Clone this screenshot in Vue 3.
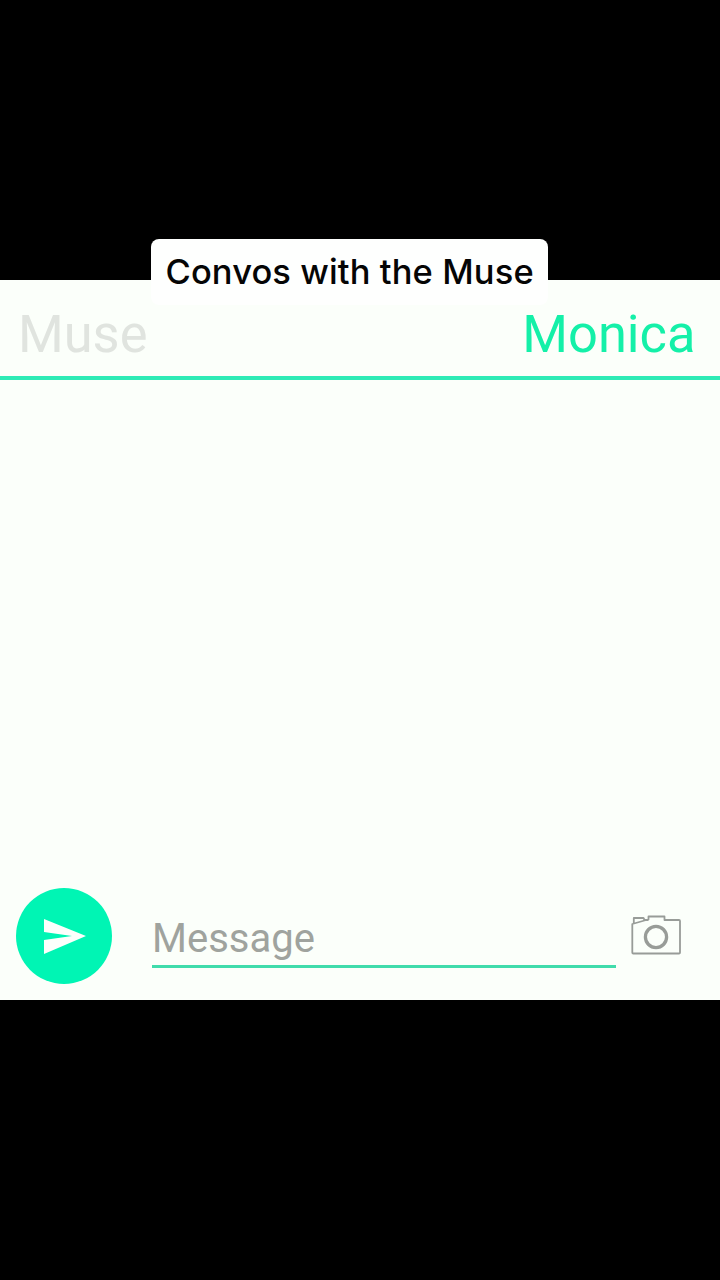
<script setup>
import { ref } from 'vue'

const message = ref('')
</script>

<template>
  <div class="screen">
    <div class="caption">Convos with the Muse</div>
    <main class="chat">
      <header class="names">
        <span class="muse">Muse</span>
        <span class="monica">Monica</span>
      </header>
      <section class="thread"></section>
      <footer class="composer">
        <button class="send" aria-label="Send">
          <svg width="96" height="96" viewBox="0 0 96 96">
            <path d="M28 31 L70 48 L28 66 V52 L56 48 L28 44 Z" fill="#fcfffc" />
          </svg>
        </button>
        <input v-model="message" class="field" placeholder="Message" />
        <svg class="camera" width="50" height="40" viewBox="0 0 50 40" fill="none" stroke="#989c98">
          <path stroke-width="1.8" stroke-linejoin="round" d="M1.3 8.5 V37.5 Q1.3 38.5 2.3 38.5 H48 Q49 38.5 49 37.5 V6 Q49 5 48 5 H33.5 V1.5 H17.5 V4.5 L13.5 5.5 L1.3 9 M2.8 8 V3 H12.5 L13.5 5 H17.5" />
          <circle cx="25" cy="22" r="10.6" stroke-width="3.3" />
        </svg>
      </footer>
    </main>
  </div>
</template>

<style>
body { background: #000; }
</style>

<style scoped>
.screen {
  position: relative;
  box-sizing: border-box;
  width: 720px;
  height: 1280px;
  padding-top: 280px;
  background: #000;
  overflow: hidden;
  font-family: Roboto, "Liberation Sans", sans-serif;
}
.caption {
  position: absolute;
  left: 151px;
  top: 239px;
  width: 397px;
  height: 66px;
  box-sizing: border-box;
  padding-left: 14.5px;
  border-radius: 8px;
  background: #fefffe;
  color: #050505;
  font: 500 34.5px/66px Inter, "Liberation Sans", sans-serif;
  letter-spacing: 0.1px;
  white-space: nowrap;
}
.chat {
  display: flex;
  flex-direction: column;
  height: 720px;
  background: #fbfffa;
}
.names {
  box-sizing: border-box;
  display: flex;
  justify-content: space-between;
  height: 100px;
  padding: 0 24.5px 0 18px;
  border-bottom: 4px solid #2eebb5;
  font-size: 52.4px;
  line-height: 109px;
}
.muse { color: #e0e4df; }
.monica { color: #14f0a8; }
.thread { flex: 1; }
.composer {
  display: flex;
  height: 112px;
  padding-left: 16px;
}
.send {
  width: 96px;
  height: 96px;
  padding: 0;
  border: 0;
  border-radius: 50%;
  background: #00f5b4;
}
.send svg { display: block; }
.field {
  box-sizing: border-box;
  width: 464px;
  height: 80px;
  margin-left: 40px;
  padding: 23px 0 0;
  border: 0;
  border-bottom: 3px solid #40dcab;
  border-radius: 0;
  background: transparent;
  outline: 0;
  color: #555;
  font: 400 40px/54px Roboto, "Liberation Sans", sans-serif;
}
.field::placeholder { color: #9fa39e; opacity: 1; }
.camera { margin: 27px 0 0 15px; }
</style>
